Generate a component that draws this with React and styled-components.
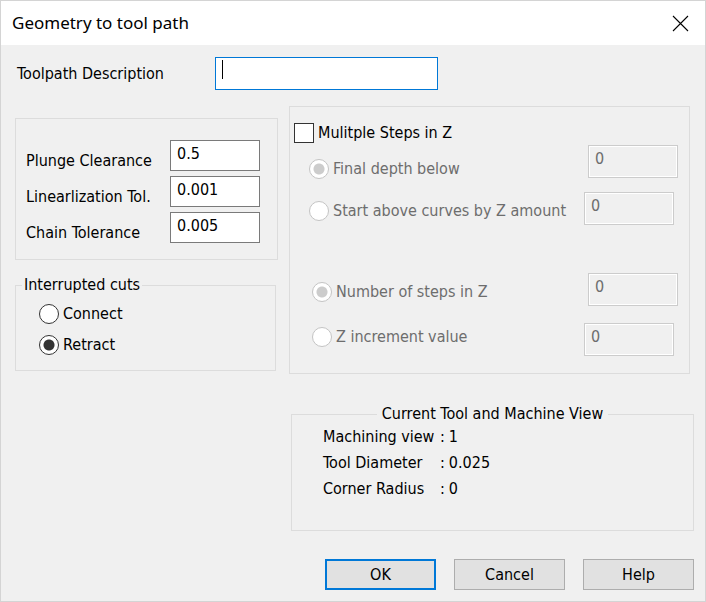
import React, { useState } from "react";
import styled, { createGlobalStyle, css } from "styled-components";

const GlobalStyle = createGlobalStyle`
  *, *::before, *::after { box-sizing: border-box; }
  body {
    margin: 0;
    background: #f0f0f0;
    color: #000;
    font-family: Tahoma, "DejaVu Sans Condensed", "Noto Sans", sans-serif;
    font-size: 16px;
    line-height: 20px;
  }
  input, button { font: inherit; color: inherit; }
`;

const Dialog = styled.form`
  display: flex;
  flex-direction: column;
  min-height: 100vh;
  border: 1px solid #d4d4d4;
  background: #f0f0f0;
`;

const TitleBar = styled.header`
  display: flex;
  align-items: center;
  justify-content: space-between;
  height: 44px;
  padding: 0 16px 0 11px;
  background: #fff;
`;

const Title = styled.h1`
  margin: 0;
  font-family: "Segoe UI", "Noto Sans", sans-serif;
  font-size: 17px;
  line-height: 24px;
  font-weight: 400;
`;

const CloseButton = styled.button`
  display: flex;
  padding: 0;
  border: 0;
  background: none;
`;

const DescriptionRow = styled.div`
  display: flex;
  align-items: center;
  padding: 12px 16px 0;
`;

const DescriptionLabel = styled.label`
  width: 198px;
`;

const DescriptionField = styled.div`
  position: relative;
  flex: 0 1 223px;
`;

const Caret = styled.span`
  position: absolute;
  top: 3px;
  left: 7px;
  width: 1px;
  height: 19px;
  background: #000;
`;

const TextInput = styled.input.attrs({ type: "text" })`
  display: block;
  width: ${(p) => (p.$wide ? "100%" : "90px")};
  height: ${(p) => (p.$tall ? "33px" : "31px")};
  padding: 0 6px 4px;
  border: 1px solid ${(p) => (p.$focused ? "#0078d7" : "#7a7a7a")};
  border-radius: 0;
  background: #fff;
  outline: none;
  ${(p) => p.$focused && css`caret-color: transparent;`}

  &:disabled {
    padding-bottom: 6px;
    border-color: #cccccc;
    background: #f0f0f0;
    box-shadow: inset 0 0 0 1px #fff;
    color: #6d6d6d;
  }
`;

const Content = styled.main`
  display: grid;
  grid-template-columns: 263px 1fr;
  column-gap: 11px;
  padding: 16px 11px 0 14px;
`;

const Column = styled.div`
  display: flex;
  flex-direction: column;
  gap: ${(p) => p.$gap};
  padding-top: ${(p) => p.$top || "0"};
`;

const Group = styled.fieldset`
  min-width: 0;
  margin: ${(p) => p.$margin || "0"};
  padding: ${(p) => p.$padding};
  border: 1px solid #dcdcdc;
`;

const Legend = styled.legend`
  margin: ${(p) => (p.$centered ? "0 auto" : "0")};
  padding: ${(p) => (p.$centered ? "0 5px" : "0 2px")};
`;

const ToleranceRow = styled.div`
  display: flex;
  align-items: flex-start;
  justify-content: space-between;
`;

const ToleranceLabel = styled.label`
  padding-top: 11px;
`;

const Stack = styled.div`
  display: flex;
  flex-direction: column;
  gap: ${(p) => p.$gap};
  padding: ${(p) => p.$padding || "0"};
`;

const Option = styled.label`
  display: flex;
  align-items: center;
  gap: 4px;
  height: 20px;
  white-space: nowrap;
  color: ${(p) => (p.$disabled ? "#6d6d6d" : "#000")};
`;

const Radio = styled.input.attrs({ type: "radio" })`
  appearance: none;
  flex: none;
  width: 20px;
  height: 20px;
  margin: 0;
  border: 1px solid #333;
  border-radius: 50%;
  background: #fff;

  &:checked {
    background: radial-gradient(circle, #333 0 5px, #fff 6px);
  }
  &:disabled {
    border-color: #c4c4c4;
  }
  &:disabled:checked {
    background: radial-gradient(circle, #ccc 0 5px, #fff 6px);
  }
`;

const Checkbox = styled.input.attrs({ type: "checkbox" })`
  appearance: none;
  flex: none;
  width: 20px;
  height: 20px;
  margin: 0;
  border: 1px solid #333;
  background: #fff;

  &:checked {
    background: #333;
    box-shadow: inset 0 0 0 4px #fff;
  }
`;

const StepPair = styled.div`
  display: flex;
  justify-content: space-between;
  padding: ${(p) => p.$padding};
`;

const StepFields = styled.div`
  display: flex;
  flex-direction: column;
  width: 94px;
  gap: ${(p) => p.$gap};

  & > :first-child { align-self: flex-end; }
`;

const InfoList = styled.dl`
  display: grid;
  grid-template-columns: 117px 1fr;
  row-gap: 6px;
  margin: 0;
`;

const Term = styled.dt``;

const Detail = styled.dd`
  display: flex;
  gap: 4px;
  margin: 0;
`;

const Footer = styled.footer`
  display: flex;
  justify-content: flex-end;
  gap: 18px;
  padding: 28px 11px 11px;
`;

const PushButton = styled.button`
  width: 111px;
  height: 31px;
  padding: 0;
  border: ${(p) => (p.$primary ? "2px solid #0078d7" : "1px solid #adadad")};
  border-radius: 0;
  background: #e1e1e1;
`;

const tolerances = [
  { id: "plunge", label: "Plunge Clearance", value: "0.5" },
  { id: "linear", label: "Linearlization Tol.", value: "0.001" },
  { id: "chain", label: "Chain Tolerance", value: "0.005" },
];

const toolInfo = [
  ["Machining view", "1"],
  ["Tool Diameter", "0.025"],
  ["Corner Radius", "0"],
];

const stepPairs = [
  {
    name: "depth",
    padding: "2px 11px 0 15px",
    optionPadding: "14px 0 0",
    optionGap: "22px",
    fieldGap: "14px",
    options: ["Final depth below", "Start above curves by Z amount"],
  },
  {
    name: "increment",
    padding: "48px 11px 0 18px",
    optionPadding: "9px 0 0",
    optionGap: "25px",
    fieldGap: "17px",
    options: ["Number of steps in Z", "Z increment value"],
  },
];

export default function App() {
  const [cut, setCut] = useState("Retract");
  const [multiple, setMultiple] = useState(false);

  return (
    <>
      <GlobalStyle />
      <Dialog onSubmit={(e) => e.preventDefault()}>
        <TitleBar>
          <Title>Geometry to tool path</Title>
          <CloseButton type="button" aria-label="Close">
            <svg width="17" height="17" viewBox="0 0 17 17" fill="none" stroke="#000" strokeWidth="1.1">
              <path d="M1 1L16 16M16 1L1 16" />
            </svg>
          </CloseButton>
        </TitleBar>

        <DescriptionRow>
          <DescriptionLabel htmlFor="description">Toolpath Description</DescriptionLabel>
          <DescriptionField>
            <TextInput id="description" $wide $tall $focused />
            <Caret />
          </DescriptionField>
        </DescriptionRow>

        <Content>
          <Column $gap="15px" $top="12px">
            <Group $padding="21px 17px 16px 10px">
              <Stack $gap="5px">
                {tolerances.map((t) => (
                  <ToleranceRow key={t.id}>
                    <ToleranceLabel htmlFor={t.id}>{t.label}</ToleranceLabel>
                    <TextInput id={t.id} defaultValue={t.value} />
                  </ToleranceRow>
                ))}
              </Stack>
            </Group>

            <Group $margin="0 2px 0 0" $padding="9px 6px 15px">
              <Legend>Interrupted cuts</Legend>
              <Stack $gap="11px" $padding="0 0 0 17px">
                {["Connect", "Retract"].map((name) => (
                  <Option key={name}>
                    <Radio name="cut" checked={cut === name} onChange={() => setCut(name)} />
                    {name}
                  </Option>
                ))}
              </Stack>
            </Group>
          </Column>

          <Column $gap="30px">
            <Group $margin="0 4px 0 0" $padding="16px 0 17px 4px">
              <Option>
                <Checkbox checked={multiple} onChange={() => setMultiple(!multiple)} />
                Mulitple Steps in Z
              </Option>
              {stepPairs.map((pair) => (
                <StepPair key={pair.name} $padding={pair.padding}>
                  <Stack $gap={pair.optionGap} $padding={pair.optionPadding}>
                    {pair.options.map((label, i) => (
                      <Option key={label} $disabled={!multiple}>
                        <Radio name={pair.name} defaultChecked={i === 0} disabled={!multiple} />
                        {label}
                      </Option>
                    ))}
                  </Stack>
                  <StepFields $gap={pair.fieldGap}>
                    {pair.options.map((label) => (
                      <TextInput key={label} $tall aria-label={label} defaultValue="0" disabled={!multiple} />
                    ))}
                  </StepFields>
                </StepPair>
              ))}
            </Group>

            <Group $margin="0 0 0 2px" $padding="3px 31px 31px">
              <Legend $centered>Current Tool and Machine View</Legend>
              <InfoList>
                {toolInfo.map(([term, value]) => (
                  <React.Fragment key={term}>
                    <Term>{term}</Term>
                    <Detail>
                      <span>:</span>
                      <span>{value}</span>
                    </Detail>
                  </React.Fragment>
                ))}
              </InfoList>
            </Group>
          </Column>
        </Content>

        <Footer>
          <PushButton type="submit" $primary>OK</PushButton>
          <PushButton type="button">Cancel</PushButton>
          <PushButton type="button">Help</PushButton>
        </Footer>
      </Dialog>
    </>
  );
}
